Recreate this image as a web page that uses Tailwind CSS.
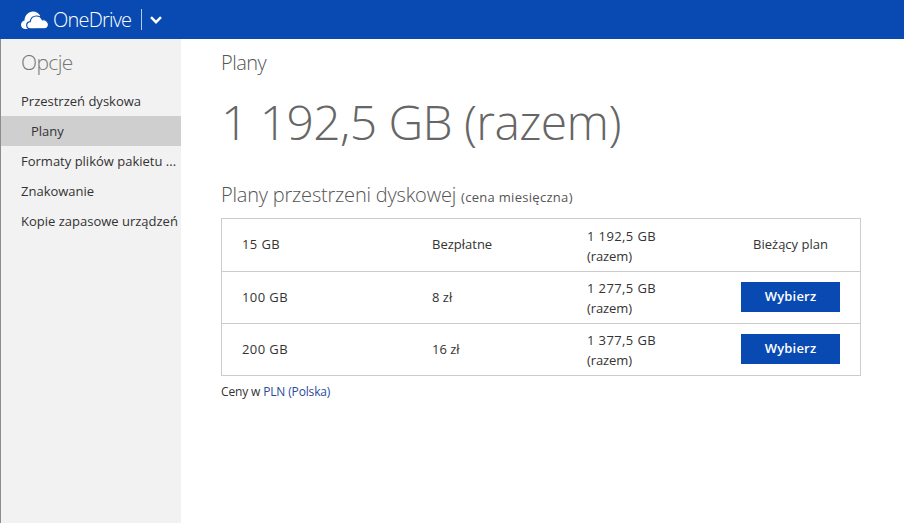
<!DOCTYPE html>
<html lang="pl">
<head>
    <meta charset="UTF-8">
    <title>OneDrive - Plany</title>
    <script src="https://cdn.jsdelivr.net/npm/@tailwindcss/browser@4"></script>
</head>
<body class="h-[523px] w-[904px] overflow-hidden bg-white font-['Open_Sans',sans-serif] text-[#333]">
    <!-- top bar -->
    <header class="flex h-[39px] items-center bg-[#094ab2] pl-[21px] text-white">
        <svg class="h-[18px] w-[28px]" viewBox="0 0 28 18" fill="#fff">
            <!-- back cloud -->
            <path d="M4 18C1.500 18 0 16 0 13.800 0 11.500 1.500 9.800 3.500 9.400 3.800 4 7.500 .5 12 .5c3.200 0 5.800 1.700 7.200 4.300L14 18z"/>
            <!-- front cloud -->
            <path d="M9.500 17.800c-2.300 0-3.800-1.600-3.800-3.500 0-2 1.500-3.500 3.500-3.700C9.700 7.300 12.300 5 15.500 5c2.600 0 4.800 1.500 5.800 3.800 3.400-.4 6.200 1.800 6.200 4.800 0 2.400-1.900 4.200-4.300 4.200z" stroke="#094ab2" stroke-width="1.200"/>
        </svg>
        <span class="ml-[4px] text-[20px] leading-none font-light tracking-[-0.8px]">OneDrive</span>
        <span class="ml-[10px] h-[21px] w-px bg-white/70"></span>
        <svg class="ml-[8px] h-[8px] w-[12px]" viewBox="0 0 12 8" fill="none" stroke="#fff" stroke-width="2.400">
            <path d="M1 1.200l5 5 5-5"/>
        </svg>
    </header>

    <div class="flex h-[484px]">
        <!-- sidebar -->
        <nav class="w-[181px] shrink-0 border-l border-[#8c8c8c] bg-[#f2f2f2] text-[13px] text-[#333]">
            <h2 class="pt-[8px] pb-[9px] pl-[20px] text-[21px] leading-[30px] font-light tracking-[-0.6px] text-[#777]">Opcje</h2>
            <div class="flex h-[30px] items-center pt-[2px] pl-[20px]">Przestrzeń dyskowa</div>
            <div class="flex h-[30px] items-center bg-[#cfcfcf] pt-[2px] pl-[30px]">Plany</div>
            <div class="flex h-[30px] items-center pt-[2px] pl-[20px] whitespace-nowrap">Formaty plików pakietu ...</div>
            <div class="flex h-[30px] items-center pt-[2px] pl-[20px]">Znakowanie</div>
            <div class="flex h-[30px] items-center pt-[2px] pl-[20px] whitespace-nowrap">Kopie zapasowe urządzeń</div>
        </nav>

        <!-- main content -->
        <main class="flex-1 pl-[40px]">
            <h2 class="pt-[9px] text-[20px] leading-[30px] font-light tracking-[-0.5px] text-[#555]">Plany</h2>
            <h1 class="mt-[12px] text-[48px] leading-[64px] font-light tracking-[-0.6px] text-[#666]">1 192,5 GB (razem)</h1>
            <h3 class="mt-[27px] flex items-baseline text-[20px] leading-[28px] font-light tracking-[-0.2px] text-[#555]">
                Plany przestrzeni dyskowej
                <span class="ml-[5px] text-[13px] font-normal tracking-[0.3px]">(cena miesięczna)</span>
            </h3>

            <div class="mt-[7px] w-[640px] border border-[#ccc] text-[13px]">
                <div class="flex h-[53px] items-center border-b border-[#ccc]">
                    <div class="w-[210px] pl-[20px] tracking-[0.4px]">15 GB</div>
                    <div class="w-[155px]">Bezpłatne</div>
                    <div class="w-[154px] pt-[1px] leading-[20px]"><span class="tracking-[0.4px]">1 192,5 GB</span><br><span class="tracking-[-0.1px]">(razem)</span></div>
                    <div class="w-[99px] text-center">Bieżący plan</div>
                </div>
                <div class="flex h-[52px] items-center border-b border-[#ccc]">
                    <div class="w-[210px] pl-[20px] tracking-[0.4px]">100 GB</div>
                    <div class="w-[155px]">8 zł</div>
                    <div class="w-[154px] leading-[20px]"><span class="tracking-[0.4px]">1 277,5 GB</span><br><span class="tracking-[-0.1px]">(razem)</span></div>
                    <button class="-mt-[2px] h-[30px] w-[99px] bg-[#094ab2] font-semibold tracking-[0.2px] text-white">Wybierz</button>
                </div>
                <div class="flex h-[51px] items-center">
                    <div class="w-[210px] pl-[20px] tracking-[0.4px]">200 GB</div>
                    <div class="w-[155px]">16 zł</div>
                    <div class="w-[154px] leading-[20px]"><span class="tracking-[0.4px]">1 377,5 GB</span><br><span class="tracking-[-0.1px]">(razem)</span></div>
                    <button class="-mt-[2px] h-[30px] w-[99px] bg-[#094ab2] font-semibold tracking-[0.2px] text-white">Wybierz</button>
                </div>
            </div>
            <p class="mt-[7px] text-[12px] leading-[18px] tracking-[-0.15px]">Ceny w <a class="text-[#2a4a9c]">PLN (Polska)</a></p>
        </main>
    </div>
</body>
</html>
